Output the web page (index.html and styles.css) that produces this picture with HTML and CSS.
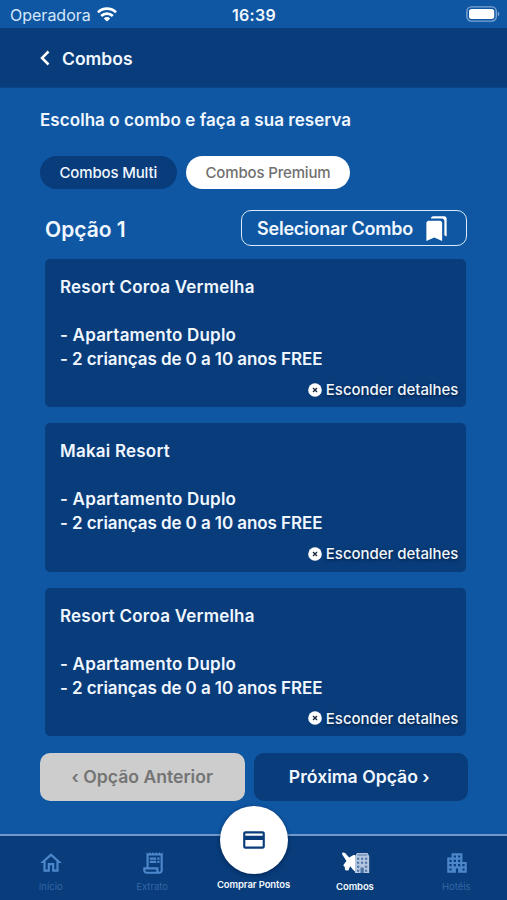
FILE: index.html
```
<!DOCTYPE html>
<html lang="pt-BR">

<head>
  <meta charset="UTF-8">
  <meta name="viewport" content="width=device-width, initial-scale=1.0">
  <title>Combos</title>
  <link rel="stylesheet" href="styles.css">
</head>

<body>
  <div class="status-bar">
    <div class="carrier">
      <span>Operadora</span>
      <svg class="wifi" viewBox="0 0 20 15" fill="none" stroke="#fff" stroke-width="2.7">
        <path d="M1 5.4a12.8 12.8 0 0 1 18 0" />
        <path d="M4.2 9a8.3 8.3 0 0 1 11.6 0" />
        <path d="M10 14.6L6.8 11.4a4.6 4.6 0 0 1 6.4 0z" fill="#fff" stroke="none" />
      </svg>
    </div>
    <div class="clock">16:39</div>
    <svg class="battery" viewBox="0 0 34 16">
      <rect x=".9" y=".9" width="29.4" height="14.2" rx="4.5" fill="none" stroke="#7ea5d2" stroke-width="1.4" />
      <rect x="3" y="3" width="25.2" height="10" rx="2.5" fill="#fff" />
      <path d="M31.8 5.6c2 .8 2 4 0 4.8z" fill="#7ea5d2" />
    </svg>
  </div>

  <header class="header">
    <svg class="back" viewBox="0 0 10 16">
      <path d="M8.5 1.5L2 8l6.5 6.5" fill="none" stroke="#fff" stroke-width="2.5" />
    </svg>
    <h1>Combos</h1>
  </header>

  <main class="content">
    <h2 class="subtitle">Escolha o combo e faça a sua reserva</h2>

    <div class="chips">
      <button class="chip chip-multi">Combos Multi</button>
      <button class="chip chip-premium">Combos Premium</button>
    </div>

    <div class="option-row">
      <h3>Opção 1</h3>
      <button class="select-combo">
        <span>Selecionar Combo</span>
        <svg viewBox="0 0 24 24" fill="#fff">
          <path d="M19 18l2 1V3c0-1.1-.9-2-2-2H8.99C7.89 1 7 1.9 7 3h10c1.1 0 2 .9 2 2v13zM15 5H5c-1.1 0-2 .9-2 2v16l7-3 7 3V7c0-1.1-.9-2-2-2z" />
        </svg>
      </button>
    </div>

    <div class="cards">
      <div class="card">
        <div class="card-title">Resort Coroa Vermelha</div>
        <div class="card-room">- Apartamento Duplo</div>
        <div class="card-kids">- 2 crianças de 0 a 10 anos FREE</div>
        <div class="toggle">
          <svg viewBox="0 0 14 14"><circle cx="7" cy="7" r="6.8" fill="#fff" /><path d="M5 5l4 4M9 5L5 9" stroke="#15253b" stroke-width="1.3" /></svg>
          <span>Esconder detalhes</span>
        </div>
      </div>
      <div class="card">
        <div class="card-title">Makai Resort</div>
        <div class="card-room">- Apartamento Duplo</div>
        <div class="card-kids">- 2 crianças de 0 a 10 anos FREE</div>
        <div class="toggle">
          <svg viewBox="0 0 14 14"><circle cx="7" cy="7" r="6.8" fill="#fff" /><path d="M5 5l4 4M9 5L5 9" stroke="#15253b" stroke-width="1.3" /></svg>
          <span>Esconder detalhes</span>
        </div>
      </div>
      <div class="card">
        <div class="card-title">Resort Coroa Vermelha</div>
        <div class="card-room">- Apartamento Duplo</div>
        <div class="card-kids">- 2 crianças de 0 a 10 anos FREE</div>
        <div class="toggle">
          <svg viewBox="0 0 14 14"><circle cx="7" cy="7" r="6.8" fill="#fff" /><path d="M5 5l4 4M9 5L5 9" stroke="#15253b" stroke-width="1.3" /></svg>
          <span>Esconder detalhes</span>
        </div>
      </div>
    </div>

    <div class="pager">
      <button class="prev">‹ Opção Anterior</button>
      <button class="next">Próxima Opção ›</button>
    </div>
  </main>

  <nav class="tabs">
    <a class="tab">
      <svg viewBox="0 0 24 24"><path d="M12 5.69l5 4.5V18h-2v-6H9v6H7v-7.81l5-4.5M12 3L2 12h3v8h6v-6h2v6h6v-8h3L12 3z" /></svg>
      <span>Início</span>
    </a>
    <a class="tab">
      <svg viewBox="0 0 24 24"><path d="M19.5 3.5L18 2l-1.5 1.5L15 2l-1.5 1.5L12 2l-1.5 1.5L9 2 7.5 3.5 6 2v14H3v3c0 1.66 1.34 3 3 3h12c1.66 0 3-1.34 3-3V2l-1.5 1.5zM15 20H6c-.55 0-1-.45-1-1v-1h10v2zm4-1c0 .55-.45 1-1 1s-1-.45-1-1v-3H8V5h11v14zM9 7h6v2H9zM16 7h2v2h-2zM9 10h6v2H9zM16 10h2v2h-2z" /></svg>
      <span>Extrato</span>
    </a>
    <a class="tab tab-buy">
      <div class="buy-circle">
        <svg viewBox="0 0 24 24"><path d="M20 4H4c-1.11 0-1.99.89-1.99 2L2 18c0 1.11.89 2 2 2h16c1.11 0 2-.89 2-2V6c0-1.11-.89-2-2-2zm0 14H4v-6h16v6zm0-10H4V6h16v2z" /></svg>
      </div>
      <span>Comprar Pontos</span>
    </a>
    <a class="tab active">
      <svg class="combo-icon" viewBox="0 0 28 22">
        <!-- plane -->
        <path d="M.3.8C1.6.1 3.2.8 4.4 2.4l2.8 3 4.3-2.4H13v16.5l-2.2-2-2.6-3.3-1.8 4.4-3.2-.3-.6-3.6-1.4-1.4 3.2-4.2L2.2 5.6.2 2.6z" />
        <!-- hotel -->
        <path d="M15 1h10.5l1.7 3v17H13V4z" fill="#b4c6de" />
        <path d="M15 5.7h2.2v2H15zM19 5.7h2.2v2H19zM23 5.7h2.2v2H23zM15 9.7h2.2v2H15zM19 9.7h2.2v2H19zM23 9.7h2.2v2H23zM15 13.7h2.2v2H15zM23 13.7h2.2v2H23zM18.5 15.5h3.3V21h-3.3zM15 17.7h2.2v2H15zM23 17.7h2.2v2H23zM15.5 2.5h9.7v1h-9.7z" fill="#4f76a8" />
      </svg>
      <span>Combos</span>
    </a>
    <a class="tab">
      <svg viewBox="0 0 24 24"><path d="M17 11V3H7v4H3v14h8v-4h2v4h8V11h-4zM7 19H5v-2h2v2zm0-4H5v-2h2v2zm0-4H5V9h2v2zm4 4H9v-2h2v2zm0-4H9V9h2v2zm0-4H9V5h2v2zm4 8h-2v-2h2v2zm0-4h-2V9h2v2zm0-4h-2V5h2v2zm4 12h-2v-2h2v2zm0-4h-2v-2h2v2z" /></svg>
      <span>Hotéis</span>
    </a>
  </nav>
</body>

</html>
```
FILE: styles.css
```
* {
  box-sizing: border-box;
}

body {
  margin: 0;
  height: 900px;
  display: flex;
  flex-direction: column;
  overflow: hidden;
  font-family: Inter, "Liberation Sans", sans-serif;
  background-color: #0f57a3;
  color: #f1f7ff;
  white-space: nowrap;
}

h1,
h2,
h3 {
  margin: 0;
  font-weight: 600;
}

button {
  border: none;
  padding: 0;
  font-family: inherit;
  color: inherit;
}

svg {
  display: block;
  flex-shrink: 0;
}

.status-bar {
  height: 28px;
  display: grid;
  grid-template-columns: 1fr auto 1fr;
  align-items: center;
  padding: 2px 7px 0 10px;
}

.carrier {
  display: flex;
  align-items: center;
  gap: 6px;
  font-size: 16px;
  color: #d5e6fa;
}

.wifi {
  width: 20px;
  height: 15px;
  margin-bottom: 2px;
}

.clock {
  font-size: 16px;
  font-weight: 600;
  letter-spacing: 0.3px;
  margin-right: 2px;
}

.battery {
  width: 34px;
  height: 16px;
  justify-self: end;
  margin-bottom: 3px;
}

.header {
  height: 60px;
  display: flex;
  align-items: center;
  padding: 1px 0 0 40px;
  gap: 12px;
  background-color: #083c7a;
  border-bottom: 1px solid #0b4589;
}

.header h1 {
  font-size: 17.5px;
}

.back {
  width: 10px;
  height: 16px;
}

.content {
  flex: 1;
  padding: 20px 39px 0 40px;
}

.subtitle {
  height: 24px;
  line-height: 25px;
  font-size: 17px;
  letter-spacing: 0.06px;
}

.chips {
  display: flex;
  gap: 9.5px;
  margin-top: 24px;
}

.chip {
  height: 33px;
  border-radius: 17px;
  font-size: 15px;
  font-weight: 500;
  letter-spacing: -0.15px;
}

.chip-multi {
  width: 136.5px;
  background-color: #083c7a;
}

.chip-premium {
  width: 164px;
  background-color: #fff;
  color: #707070;
}

.option-row {
  display: flex;
  justify-content: space-between;
  align-items: center;
  margin: 21px 0 13px;
  padding: 0 1.5px 0 5px;
}

.option-row h3 {
  padding-top: 2px;
  font-size: 21px;
}

.select-combo {
  width: 225.5px;
  height: 36px;
  display: flex;
  align-items: center;
  justify-content: space-between;
  padding: 0 16px 0 15px;
  border: 1.5px solid #d9eafc;
  border-radius: 10px;
  background: none;
  font-size: 18px;
  font-weight: 600;
  letter-spacing: -0.22px;
}

.select-combo svg {
  width: 27px;
  height: 27px;
}

.cards {
  display: flex;
  flex-direction: column;
  gap: 16px;
  padding: 0 1.6px 0 5px;
}

.card {
  height: 148.4px;
  padding: 16px 8px 0 15px;
  border-radius: 5px;
  background-color: #083c7a;
  font-size: 17px;
  font-weight: 600;
  line-height: 24px;
}

.card-title {
  letter-spacing: 0.22px;
}

.card-room {
  margin-top: 24px;
  letter-spacing: 0.2px;
}

.card-kids {
  letter-spacing: -0.08px;
}

.toggle {
  display: flex;
  align-items: center;
  justify-content: flex-end;
  gap: 4px;
  margin-top: 7px;
  font-size: 15px;
  font-weight: 500;
  letter-spacing: -0.04px;
  text-shadow: 0 1px 3px #021a38;
}

.toggle svg {
  width: 14px;
  height: 14px;
  margin-bottom: 1px;
}

.pager {
  display: flex;
  gap: 9.5px;
  margin-top: 16.4px;
}

.pager button {
  height: 48px;
  border-radius: 10px;
  font-size: 17.6px;
  font-weight: 600;
}

.pager .prev {
  width: 204.5px;
  background-color: #cdcdcd;
  color: #747474;
}

.pager .next {
  width: 213.5px;
  padding-right: 3px;
  background-color: #083c7a;
}

.tabs {
  height: 66px;
  display: grid;
  grid-template-columns: repeat(5, 1fr);
  border-top: 2px solid #729ac9;
  background-color: #083c7a;
}

.tab {
  display: flex;
  flex-direction: column;
  align-items: center;
  padding-top: 14px;
  font-size: 9.5px;
  line-height: 14px;
  color: #3267a6;
}

.tab svg {
  width: 26px;
  height: 26px;
  margin-left: 1px;
  fill: #4d87cb;
}

.tab span {
  margin-top: 4px;
}

.tab.active,
.tab-buy {
  color: #f4f8ff;
  font-weight: 600;
}

.tab.active {
  letter-spacing: -0.1px;
}

.tab .combo-icon {
  width: 28px;
  height: 22px;
  margin: 2px 0 2px 2px;
  fill: #fff;
}

.tab-buy {
  padding-top: 0;
  letter-spacing: -0.1px;
}

.buy-circle {
  width: 68px;
  height: 68px;
  display: flex;
  align-items: center;
  justify-content: center;
  margin: -30px 0 0 1px;
  border-radius: 50%;
  background-color: #fff;
  box-shadow: 0 1px 4px rgba(0, 20, 60, 0.6);
}

.tab-buy svg {
  margin-left: 0;
  fill: #083c7a;
}
```
